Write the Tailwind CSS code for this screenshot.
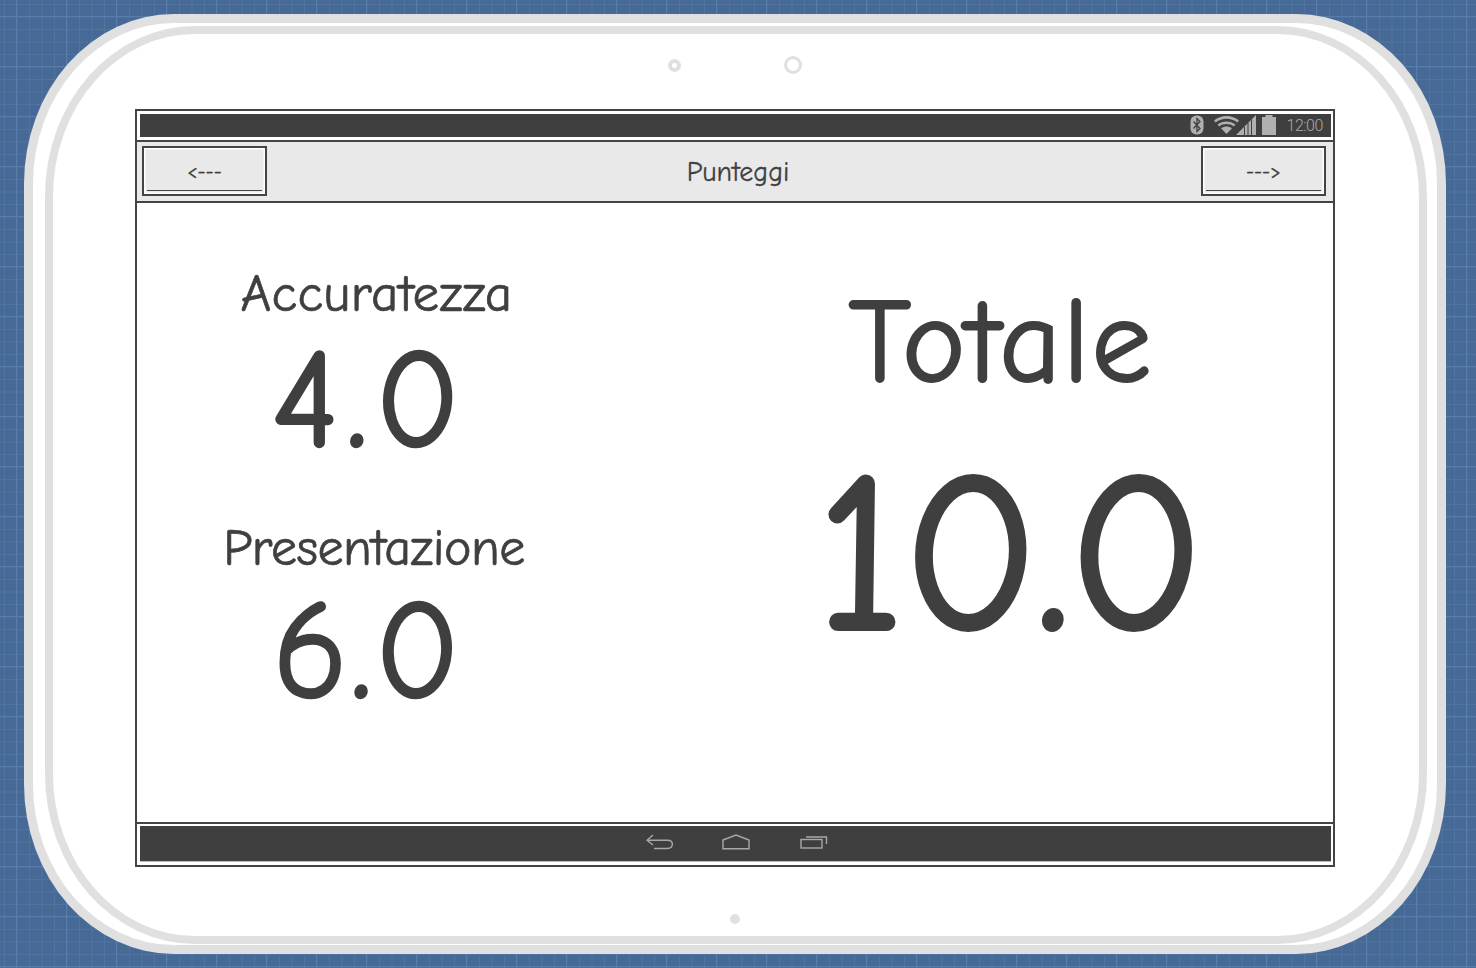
<!DOCTYPE html>
<html lang="en">
<head>
<meta charset="UTF-8">
<meta name="viewport" content="width=device-width, initial-scale=1.0">
<title>Punteggi</title>
<script src="https://cdn.jsdelivr.net/npm/@tailwindcss/browser@4"></script>
</head>
<body class="h-[968px] overflow-hidden bg-[#466a95] bg-[linear-gradient(#587cab_1.5px,transparent_1.5px),linear-gradient(90deg,#587cab_1.5px,transparent_1.5px),linear-gradient(#4f74a1_1px,transparent_1px),linear-gradient(90deg,#4f74a1_1px,transparent_1px)] bg-[size:50px_50px,50px_50px,12.5px_12.5px,12.5px_12.5px] bg-[position:16px_16px,16px_16px,4px_4px,4px_4px] pt-[14px] pl-[24px] font-['Comic_Neue',fantasy] text-[#3f3f3f]">

    <!-- Tablet body -->
    <div class="h-[940px] w-[1422px] rounded-[150px/170px] border-[9px] border-[#e0e0e0] bg-white pt-[3px] pl-[12px]">
        <div class="h-[918px] w-[1382px] rounded-[150px/170px] border-[8px] border-[#e0e0e0]">

            <!-- Cameras -->
            <div class="flex items-center pt-[22px] pl-[615px]">
                <div class="size-[13px] rounded-full border-[4px] border-[#e0e0e0]"></div>
                <div class="ml-[103px] size-[18px] rounded-full border-[3.5px] border-[#e0e0e0]"></div>
            </div>

            <!-- Screen -->
            <div class="mt-[35px] ml-[82px] flex h-[758px] w-[1200px] flex-col border-[2.5px] border-[#444]">

                <!-- Status bar -->
                <div class="mx-[2.5px] mt-[2.5px] flex h-[23px] items-center justify-end bg-[#3f3f3f] pr-[6px] text-[#a9a9a9]">
                    <svg class="mr-[10px]" width="14" height="20" viewBox="0 0 14 20">
                        <rect x="0.5" y="0.5" width="13" height="19" rx="6" fill="#b0b0b0"/>
                        <path d="M3.5 6.5l6.5 7-3 3v-13l3 3-6.5 7" fill="none" stroke="#3f3f3f" stroke-width="1.3"/>
                    </svg>
                    <svg class="mr-[-3px]" width="25" height="18" viewBox="0 0 25 18">
                        <path d="M0 4.5C7-1.500 18-1.500 25 4.500L23.300 6.500C17 1.500 8 1.500 1.700 6.500Z" fill="#b0b0b0"/>
                        <path d="M3.500 8.500C8.500 4.500 16.500 4.500 21.500 8.500L19.800 10.500C15.500 7.300 9.500 7.300 5.200 10.500Z" fill="#b0b0b0"/>
                        <path d="M7 12.300C10.500 9.800 14.500 9.800 18 12.300L12.500 18Z" fill="#b0b0b0"/>
                    </svg>
                    <svg class="mr-[6px]" width="20" height="20" viewBox="0 0 20 20">
                        <path d="M20 0V20H0Z" fill="#b0b0b0"/>
                        <path d="M8.500 12V20M12 8V20M15.500 4.500V20" stroke="#3f3f3f" stroke-width="1"/>
                    </svg>
                    <svg class="mr-[11px]" width="14" height="20" viewBox="0 0 14 20">
                        <path d="M0 2H3.500V0H10.500V2H14V20H0Z" fill="#b0b0b0"/>
                    </svg>
                    <span class="mt-[1px] w-[38px] font-['Roboto',sans-serif] text-[16px] font-light tracking-[-0.5px]">12:00</span>
                </div>

                <!-- Title bar -->
                <div class="mt-[3px] flex h-[63.5px] items-center justify-between border-y-[2.5px] border-[#444] bg-[#e9e9e9] pr-[7px] pl-[5px]">
                    <div class="relative flex h-[50px] w-[125px] items-center justify-center border-[2px] border-[#444] bg-[#e9e9e9] text-[20px] shadow-[inset_0_0_0_1.5px_white] [-webkit-text-stroke:0.3px]">
                        <span class="mt-[2px]">&lt;---</span>
                        <div class="absolute inset-x-[3px] bottom-[3px] h-[1.5px] bg-[#444]"></div>
                    </div>
                    <span class="mt-[2px] ml-[8px] text-[28px] [-webkit-text-stroke:0.3px]">Punteggi</span>
                    <div class="relative flex h-[50px] w-[125px] items-center justify-center border-[2px] border-[#444] bg-[#e9e9e9] text-[20px] shadow-[inset_0_0_0_1.5px_white] [-webkit-text-stroke:0.3px]">
                        <span class="mt-[2px]">---&gt;</span>
                        <div class="absolute inset-x-[3px] bottom-[3px] h-[1.5px] bg-[#444]"></div>
                    </div>
                </div>

                <!-- Scores -->
                <div class="flex flex-1">
                    <div class="flex w-[474px] flex-col items-center pt-[58.5px]">
                        <div class="ml-[5px] text-[53px] leading-[64px] tracking-[0.3px] [-webkit-text-stroke:0.7px]">Accuratezza</div>
                        <div class="mt-[20px] mr-[9px] text-[140px] leading-[110px] tracking-[7px] [-webkit-text-stroke:2.5px]">4.0</div>
                        <div class="mt-[60.5px] text-[52px] leading-[64px] tracking-[-0.5px] [-webkit-text-stroke:0.7px]">Presentazione</div>
                        <div class="mt-[16.5px] mr-[13px] text-[140px] leading-[110px] tracking-[2.5px] [-webkit-text-stroke:2.5px]">6.0</div>
                    </div>
                    <div class="flex flex-1 flex-col items-center pt-[74px] pl-[58px]">
                        <div class="text-[120px] leading-[130px] tracking-[2px] [-webkit-text-stroke:2px]">Totale</div>
                        <div class="mt-[48.5px] ml-[16px] text-[225px] leading-[200px] tracking-[-3px] [-webkit-text-stroke:4px]">10.0</div>
                    </div>
                </div>

                <!-- Navigation bar -->
                <div class="flex h-[43.5px] flex-col border-t-[2.5px] border-[#444] px-[2.5px] pt-[2.5px]">
                    <div class="flex h-[36px] items-center border-b border-[#bbb] bg-[#3f3f3f] pb-[3px] pl-[506px]">
                        <svg width="28" height="16" viewBox="0 0 28 16" fill="none" stroke="#a9a9a9" stroke-width="1.4">
                            <path d="M7 1L1 6.200L7 11"/>
                            <path d="M1 6.200H21.500C28 6.200 28 14.500 21.500 14.500H8"/>
                        </svg>
                        <svg class="ml-[47px]" width="30" height="16" viewBox="0 0 30 16" fill="none" stroke="#a9a9a9" stroke-width="1.4">
                            <path d="M2 6L15 1L28 6V14.800H2Z"/>
                        </svg>
                        <svg class="ml-[49px]" width="28" height="16" viewBox="0 0 28 16" fill="none" stroke="#a9a9a9" stroke-width="1.4">
                            <rect x="1" y="5.500" width="21" height="8.500"/>
                            <path d="M6 3H26.500V10"/>
                        </svg>
                    </div>
                </div>
            </div>

            <!-- Home dot -->
            <div class="mt-[47px] ml-[677px] size-[10px] rounded-full bg-[#e0e0e0]"></div>
        </div>
    </div>
</body>
</html>
